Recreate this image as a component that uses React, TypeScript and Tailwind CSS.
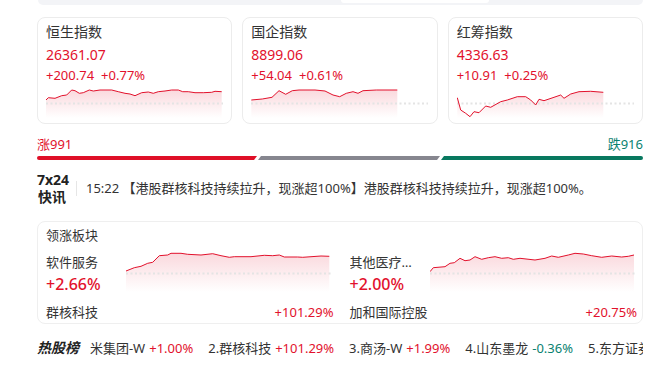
import { useId } from "react";

type Pt = [number, number];

const RED = "#e2112c";

const indices: {
  name: string;
  value: string;
  chg: string;
  pct: string;
  x0: number;
  pts: Pt[];
}[] = [
  {
    name: "恒生指数",
    value: "26361.07",
    chg: "+200.74",
    pct: "+0.77%",
    x0: 46,
    pts: [
      [46, 100], [48.3, 97.7], [55, 98.3], [61.7, 95.7], [66.7, 95], [71.7, 90],
      [75, 90.7], [79.3, 93.3], [83.3, 92.7], [89.3, 90], [93.3, 91], [100, 90],
      [111.7, 90], [118.3, 91.7], [125, 93.3], [130, 94], [135, 95.7], [141.7, 92.7],
      [148.3, 92], [153.3, 93.3], [158.3, 91.7], [165, 91], [171.7, 90], [178.3, 90],
      [182.7, 91.7], [188.3, 91.7], [195, 92.7], [203.3, 92.7], [211.7, 92.3],
      [215, 91.3], [221.7, 91.7],
    ],
  },
  {
    name: "国企指数",
    value: "8899.06",
    chg: "+54.04",
    pct: "+0.61%",
    x0: 252,
    pts: [
      [252.3, 100], [263.3, 99], [273, 97.3], [280, 90.7], [286.7, 94.3],
      [293.3, 90.7], [300, 90], [316, 90], [326, 91], [334, 95], [340.7, 96.7],
      [347.3, 93.3], [354, 91.7], [359, 93.3], [364, 90.7], [377.3, 90], [398.3, 90],
    ],
  },
  {
    name: "红筹指数",
    value: "4336.63",
    chg: "+10.91",
    pct: "+0.25%",
    x0: 457,
    pts: [
      [457.3, 97.7], [460.7, 110], [465.7, 113.3], [470, 116.7], [474, 111.7],
      [479, 112.7], [485.7, 106], [490.7, 107.3], [500.7, 101.7], [507.3, 100],
      [517.3, 96.7], [525.7, 96.7], [530.7, 100], [535.7, 105], [539, 99.3],
      [544, 100.7], [554, 97.3], [560.7, 95], [564, 98.3], [570.7, 94],
      [579, 91.7], [590.7, 91.3], [603.3, 92.3],
    ],
  },
];

const sectors: {
  name: string;
  pct: string;
  lead: string;
  leadPct: string;
  x0: number;
  pts: Pt[];
}[] = [
  {
    name: "软件服务",
    pct: "+2.66%",
    lead: "群核科技",
    leadPct: "+101.29%",
    x0: 125,
    pts: [
      [125, 271], [133.3, 267.7], [140, 266.3], [146.7, 263.3], [151.7, 262.3],
      [158.3, 255.7], [166.7, 255], [170, 253.3], [180, 253.3], [186.7, 254.3],
      [200, 255], [211.7, 253.7], [220, 255.7], [228.3, 257.3], [233.3, 256.7],
      [250, 256.7], [263.3, 255.3], [271.7, 255.7], [278.3, 255], [283.3, 257],
      [296.7, 257], [301.7, 257.3], [320, 256], [328.3, 256.3],
    ],
  },
  {
    name: "其他医疗保健",
    pct: "+2.00%",
    lead: "加和国际控股",
    leadPct: "+20.75%",
    x0: 429,
    pts: [
      [429, 271.7], [432.3, 267.7], [444, 266.7], [449, 263.3], [453.3, 262.7],
      [459, 258.3], [464, 260.7], [469, 260], [474, 256.7], [480.7, 259.3],
      [487.3, 257.7], [494, 256.7], [500.7, 258.3], [507.3, 257.7], [512.3, 259.3],
      [519, 258.3], [534, 260], [544, 258.3], [550.7, 256], [557.3, 257.3],
      [567.3, 255], [574, 253.3], [582.3, 254], [590.7, 255.7], [600.7, 257.3],
      [610.7, 256], [620.7, 257], [627.3, 256.3], [633, 255],
    ],
  },
];

const hot: { name: string; pct: string; up: boolean }[] = [
  { name: "1.小米集团-W", pct: "+1.00%", up: true },
  { name: "2.群核科技", pct: "+101.29%", up: true },
  { name: "3.商汤-W", pct: "+1.99%", up: true },
  { name: "4.山东墨龙", pct: "-0.36%", up: false },
  { name: "5.东方证券", pct: "+2.10%", up: true },
];

function Spark({
  pts,
  x0,
  y0,
  w,
  h,
  base,
}: {
  pts: Pt[];
  x0: number;
  y0: number;
  w: number;
  h: number;
  base: number;
}) {
  const id = useId().replace(/:/g, "");
  const p = pts.map(([x, y]) => [x - x0, y - y0]);
  const line = p.map(([x, y]) => `${x.toFixed(1)},${y.toFixed(1)}`).join(" ");
  const first = p[0];
  const last = p[p.length - 1];
  const area = `${line} ${last[0].toFixed(1)},${h} ${first[0].toFixed(1)},${h}`;
  return (
    <svg width={w} height={h} className="block shrink-0">
      <defs>
        <linearGradient id={`g${id}`} x1="0" y1="0" x2="0" y2="1">
          <stop offset="0%" stopColor={RED} stopOpacity="0.16" />
          <stop offset="100%" stopColor={RED} stopOpacity="0" />
        </linearGradient>
      </defs>
      <polygon points={area} fill={`url(#g${id})`} />
      <line
        x1="0"
        x2={w}
        y1={base - y0 + 0.5}
        y2={base - y0 + 0.5}
        stroke="#e4e4e4"
        strokeWidth="2"
        strokeDasharray="2 2.5"
      />
      <polyline points={line} fill="none" stroke={RED} strokeWidth="1" strokeLinejoin="round" />
    </svg>
  );
}

export default function App() {
  return (
    <div className="w-[668px] h-[365px] overflow-hidden bg-white text-[#333] font-['Noto_Sans','Noto_Sans_CJK_SC',sans-serif]">
      {/* search bar bottom edge */}
      <div className="ml-[38px] w-[605px] h-[5px] bg-[#f3f4f7] rounded-b-[12px] flex">
        <div className="ml-[303px] w-[148px] h-[3px] bg-white rounded-b-[8px]" />
      </div>

      <div className="ml-[37px] w-[606px]">
        {/* index cards */}
        <div className="mt-[12px] grid grid-cols-3 gap-[10px]">
          {indices.map((c) => (
            <div key={c.name} className="rounded-lg border border-[#ececec] bg-white px-[8px] pt-[4px] pb-[5px]">
              <div className="text-[14px] leading-[20px] text-[#333]">{c.name}</div>
              <div className="mt-[3px] text-[14px] leading-[20px] text-[#e2112c]">{c.value}</div>
              <div className="flex gap-[7px] text-[13px] leading-[20px] text-[#e2112c]">
                <span>{c.chg}</span>
                <span>{c.pct}</span>
              </div>
              <div className="mt-[1px]">
                <Spark pts={c.pts} x0={c.x0} y0={86} w={177} h={32} base={103} />
              </div>
            </div>
          ))}
        </div>

        {/* advance / decline */}
        <div className="mt-[11px] flex justify-between text-[13px] leading-[18px]">
          <span className="text-[#e2112c]">涨991</span>
          <span className="text-[#0a8270]">跌916</span>
        </div>
        <div className="mt-[3px] flex h-[4px] gap-[1px]">
          <div className="w-[220px] bg-[#df0f27] rounded-l-full [clip-path:polygon(0_0,100%_0,calc(100%-3px)_100%,0_100%)]" />
          <div className="flex-1 bg-[#86868f] [clip-path:polygon(3px_0,100%_0,calc(100%-3px)_100%,0_100%)]" />
          <div className="w-[202px] bg-[#08785f] rounded-r-full [clip-path:polygon(3px_0,100%_0,100%_100%,0_100%)]" />
        </div>

        {/* 7x24 news */}
        <div className="mt-[11px] flex items-center">
          <div className="w-[30px] text-center text-[14px] font-bold leading-[17px] text-[#222]">
            <div>7x24</div>
            <div>快讯</div>
          </div>
          <div className="ml-[9px] w-px h-[15px] bg-[#e6e6e6]" />
          <div className="ml-[9px] text-[13px] leading-[18px] text-[#333] whitespace-nowrap">
            15:22 【港股群核科技持续拉升，现涨超100%】港股群核科技持续拉升，现涨超100%。
          </div>
        </div>

        {/* leading sectors */}
        <div className="mt-[16px] rounded-lg border border-[#efefef] bg-white pl-[8px] pr-[5px] pt-[4px] pb-[2px]">
          <div className="text-[13px] leading-[18px]">领涨板块</div>
          <div className="mt-[6px] grid grid-cols-2 gap-[16px]">
            {sectors.map((s) => (
              <div key={s.name}>
                <div className="flex">
                  <div className="w-[80px] shrink-0 pt-[3px]">
                    <div className="w-[66px] truncate text-[13px] leading-[18px]">{s.name}</div>
                    <div className="mt-[2px] text-[16px] font-medium leading-[22px] text-[#e2112c]">{s.pct}</div>
                  </div>
                  <Spark pts={s.pts} x0={s.x0} y0={250} w={205} h={42} base={273} />
                </div>
                <div className="mt-[8px] flex justify-between text-[13px] leading-[18px]">
                  <span>{s.lead}</span>
                  <span className="text-[#e2112c]">{s.leadPct}</span>
                </div>
              </div>
            ))}
          </div>
        </div>

        {/* hot stocks */}
        <div className="mt-[14px] flex items-center leading-[20px]">
          <span className="shrink-0 pr-[2px] text-[14px] font-bold italic text-[#222]">热股榜</span>
          <div className="ml-[9px] min-w-0 flex-1 overflow-hidden">
            <div className="-ml-[24px] flex gap-[15px] whitespace-nowrap text-[13px]">
              {hot.map((h) => (
                <span key={h.name} className="shrink-0">
                  <span className="text-[#333]">{h.name}</span>
                  <span className={h.up ? "ml-[4px] text-[#e2112c]" : "ml-[4px] text-[#0a8270]"}>{h.pct}</span>
                </span>
              ))}
            </div>
          </div>
        </div>
      </div>
    </div>
  );
}
